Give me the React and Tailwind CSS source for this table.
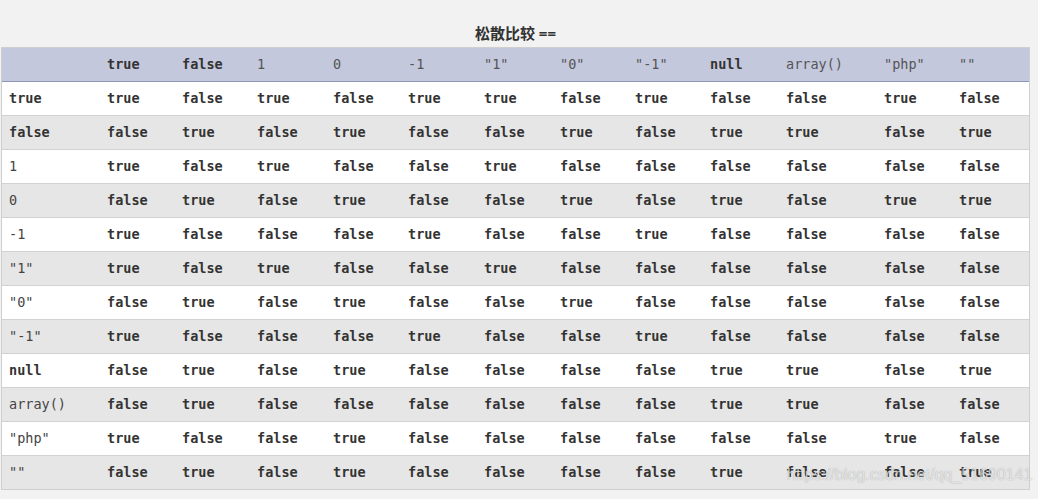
import React from 'react';

const cols = ['true', 'false', '1', '0', '-1', '"1"', '"0"', '"-1"', 'null', 'array()', '"php"', '""'];
const bold = new Set(['true', 'false', 'null']);

const rows = [
  ['true', 'true false true false true true false true false false true false'],
  ['false', 'false true false true false false true false true true false true'],
  ['1', 'true false true false false true false false false false false false'],
  ['0', 'false true false true false false true false true false true true'],
  ['-1', 'true false false false true false false true false false false false'],
  ['"1"', 'true false true false false true false false false false false false'],
  ['"0"', 'false true false true false false true false false false false false'],
  ['"-1"', 'true false false false true false false true false false false false'],
  ['null', 'false true false true false false false false true true false true'],
  ['array()', 'false true false false false false false false true true false false'],
  ['"php"', 'true false false true false false false false false false true false'],
  ['""', 'false true false true false false false false true false false true'],
];

const grid = 'grid grid-cols-[98px_75px_75px_76px_75px_76px_76px_75px_75px_76px_98px_75px_77px]';

function Cell({ v, head }) {
  const b = bold.has(v);
  return (
    <div
      className={`pl-[7px] flex items-center whitespace-pre ${b ? 'font-bold text-[#333]' : head ? 'text-[#555]' : 'text-[#444]'}`}
    >
      {v}
    </div>
  );
}

export default function App() {
  return (
    <div className="relative min-h-[499px] bg-[#f2f2f2] pt-[24px] pl-px" style={{ fontFamily: '"DejaVu Sans Mono", "Liberation Mono", monospace' }}>
      <div className="w-[1029px] text-center text-[15px] leading-[18px] font-bold text-[#333] mb-[5px]" style={{ fontFamily: '"Noto Sans", "Noto Sans CJK SC", sans-serif' }}>
        松散比较 ==
      </div>
      <div className="w-[1029px] border border-[#cfcfcf] text-[13.5px]">
        <div className={`${grid} h-[34px] bg-[#c3c8dd] border-b border-[#8f95b6]`}>
          <div />
          {cols.map((c, i) => (
            <Cell key={i} v={c} head />
          ))}
        </div>
        {rows.map(([h, vals], r) => (
          <div
            key={r}
            className={`${grid} ${r === rows.length - 1 ? 'h-[33px]' : 'h-[34px] border-b border-[#d2d2d2]'} ${r % 2 ? 'bg-[#e6e6e6]' : 'bg-white'}`}
          >
            <Cell v={h} />
            {vals.split(' ').map((v, i) => (
              <Cell key={i} v={v} />
            ))}
          </div>
        ))}
      </div>
      <div
        className="absolute left-[787px] top-[463px] text-[16px] text-white/70 whitespace-nowrap pointer-events-none"
        style={{ fontFamily: '"Liberation Sans", Arial, sans-serif', textShadow: '0 0 1px rgba(0,0,0,0.35)' }}
      >
        https://blog.csdn.net/qq_51690141
      </div>
    </div>
  );
}
